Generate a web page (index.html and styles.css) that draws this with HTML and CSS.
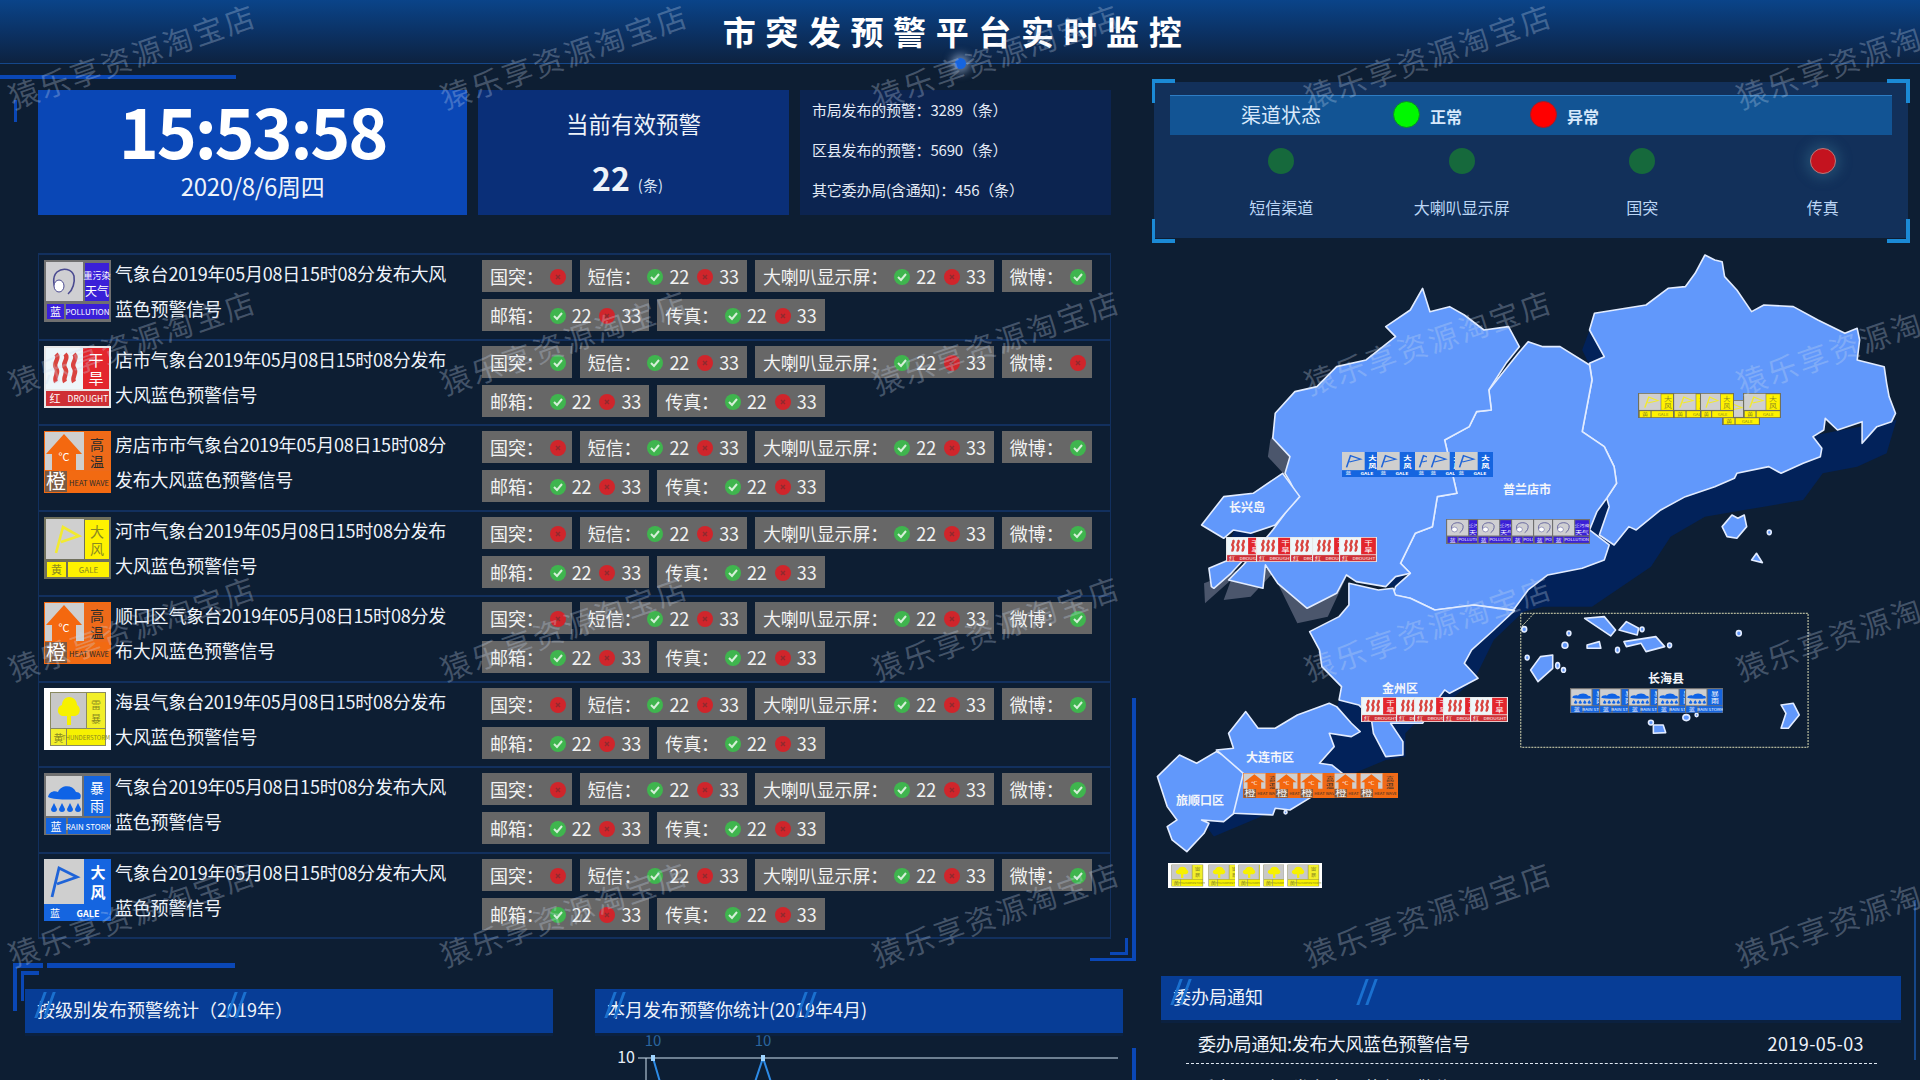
FILE: index.html
```html
<!DOCTYPE html>
<html lang="zh-CN">
<head>
<meta charset="utf-8">
<title>市突发预警平台实时监控</title>
<link rel="stylesheet" href="styles.css">
</head>
<body>
<svg class="sprite" aria-hidden="true">
  <symbol id="ok" viewBox="0 0 16 16"><circle cx="8" cy="8" r="8" fill="#3fb54e"/><path d="M4 8l3 3 5-6" fill="none" stroke="#d5f0d8" stroke-width="2"/></symbol>
  <symbol id="no" viewBox="0 0 16 16"><circle cx="8" cy="8" r="8" fill="#d0252b"/><path d="M6 6l4 4M10 6l-4 4" fill="none" stroke="#8f2a2f" stroke-width="1.4"/></symbol>

  <symbol id="w-pollution" viewBox="0 0 67 62" preserveAspectRatio="none">
    <rect width="67" height="62" fill="#707070"/>
    <rect x="2" y="2" width="37" height="39" fill="#cfcfd2"/>
    <rect x="41" y="3" width="24" height="38" fill="#3a20d8"/>
    <rect x="3" y="44" width="17" height="15" fill="#3a20d8"/>
    <rect x="22" y="44" width="43" height="15" fill="#3a20d8"/>
    <path d="M14 31c-5-4-6-14-1-19 6-5 15-3 17 4 1 6-1 14-6 18" fill="none" stroke="#4a4a90" stroke-width="1.6"/>
    <ellipse cx="15" cy="26" rx="5" ry="6" fill="#fff" stroke="#4a4a90"/>
    <text class="ws" x="53" y="19" font-size="9">重污染</text>
    <text class="ws" x="53" y="36" font-size="12">天气</text>
    <text class="ws" x="11.5" y="56" font-size="11">蓝</text>
    <text class="ws" x="43.5" y="55" font-size="8">POLLUTION</text>
  </symbol>

  <symbol id="w-drought" viewBox="0 0 67 62" preserveAspectRatio="none">
    <rect width="67" height="62" fill="#e8e8e8"/>
    <rect x="2" y="2" width="37" height="41" fill="#eef6fa"/>
    <rect x="39" y="2" width="26" height="41" fill="#e3262d"/>
    <rect x="2" y="45" width="63" height="15" fill="#cf2f35"/>
    <path d="M12 8c5 5-4 9 0 14s-3 9 0 14M21 8c5 5-4 9 0 14s-3 9 0 14M30 8c5 5-4 9 0 14s-3 9 0 14" fill="none" stroke="#d9443f" stroke-width="4.4"/>
    <text class="ws" x="52" y="20" font-size="15">干</text>
    <text class="ws" x="52" y="38" font-size="15">旱</text>
    <text class="ws" x="11" y="57" font-size="11">红</text>
    <text class="ws" x="44" y="56" font-size="8.5">DROUGHT</text>
  </symbol>

  <symbol id="w-heat" viewBox="0 0 67 62" preserveAspectRatio="none">
    <rect width="67" height="62" fill="#f26a12"/>
    <rect x="1" y="1" width="39" height="38" fill="#cfcfcf"/>
    <path d="M20 3l18 20h-6v17H8V23H2z" fill="#f4680f"/>
    <rect x="40" y="2" width="26" height="38" fill="#ee6a1a"/>
    <rect x="1" y="40" width="22" height="21" fill="#7a5a44"/>
    <text class="ws" x="20" y="30" font-size="11">°C</text>
    <text class="wk" x="53" y="19" font-size="14">高</text>
    <text class="wk" x="53" y="36" font-size="14">温</text>
    <text class="ws" x="12" y="58" font-size="20">橙</text>
    <text class="wk" x="45" y="55" font-size="7.5">HEAT WAVE</text>
  </symbol>

  <symbol id="w-gale-y" viewBox="0 0 67 62" preserveAspectRatio="none">
    <rect width="67" height="62" fill="#70705c"/>
    <rect x="2" y="2" width="38" height="40" fill="#cfcfcf"/>
    <rect x="41" y="3" width="24" height="39" fill="#fff200"/>
    <rect x="3" y="45" width="19" height="15" fill="#fff200"/>
    <rect x="24" y="45" width="41" height="15" fill="#fff200"/>
    <path d="M12 36l7-26 16 9-18 6" fill="none" stroke="#f2ea30" stroke-width="2.6"/>
    <text class="wy" x="53" y="20" font-size="14">大</text>
    <text class="wy" x="53" y="37" font-size="14">风</text>
    <text class="wy" x="12.5" y="57" font-size="11">黄</text>
    <text class="wy" x="44.500" y="56" font-size="8">GALE</text>
  </symbol>

  <symbol id="w-hail" viewBox="0 0 67 62" preserveAspectRatio="none">
    <rect width="67" height="62" fill="#fff"/>
    <rect x="6" y="4" width="56" height="54" fill="#8a8a60"/>
    <rect x="7" y="5" width="35" height="35" fill="#c8c8c8"/>
    <rect x="43" y="5" width="18" height="35" fill="#f2ef2a"/>
    <rect x="7" y="41" width="15" height="16" fill="#f2ef2a"/>
    <rect x="23" y="41" width="38" height="16" fill="#f7f100"/>
    <path d="M25 9c5 0 8 4 8 8 4 2 4 10-2 11h-4v9h-4v-9h-5c-6-2-5-10 0-11 0-4 3-8 7-8z" fill="#f7f100"/>
    <text class="wy" x="52" y="21" font-size="10">雷</text>
    <text class="wy" x="52" y="35" font-size="10">暴</text>
    <text class="wy" x="14.500" y="54" font-size="10">黄</text>
    <text class="wy" x="42" y="52" font-size="6">THUNDERSTORM</text>
  </symbol>

  <symbol id="w-rain" viewBox="0 0 67 62" preserveAspectRatio="none">
    <rect width="67" height="62" fill="#707070"/>
    <rect x="2" y="3" width="36" height="40" fill="#cfcfcf"/>
    <rect x="40" y="3" width="26" height="40" fill="#1565e0"/>
    <rect x="2" y="45" width="20" height="16" fill="#1565e0"/>
    <rect x="24" y="45" width="42" height="16" fill="#1565e0"/>
    <path d="M4 24c1-5 6-7 10-5 3-7 14-8 18 0 4 0 6 3 4 7-8 1-26 1-32-2z" fill="#0f63e6"/>
    <path d="M10 30l3 6a3 3 0 1 1-6 0zM18 30l3 6a3 3 0 1 1-6 0zM26 30l3 6a3 3 0 1 1-6 0zM34 30l3 6a3 3 0 1 1-6 0z" fill="#0f63e6"/>
    <text class="ws" x="53" y="20" font-size="14">暴</text>
    <text class="ws" x="53" y="38" font-size="14">雨</text>
    <text class="ws" x="12" y="58" font-size="11">蓝</text>
    <text class="ws" x="45" y="57" font-size="8">RAIN STORM</text>
  </symbol>

  <symbol id="w-gale-b" viewBox="0 0 67 62" preserveAspectRatio="none">
    <rect width="67" height="62" fill="#1565e0"/>
    <rect x="0" y="0" width="40" height="45" fill="#cfcfcf"/>
    <path d="M8 38l7-29 18 9-20 7" fill="none" stroke="#1f64d8" stroke-width="2.8"/>
    <text class="ws bold" x="54" y="19" font-size="15">大</text>
    <text class="ws bold" x="54" y="39" font-size="15">风</text>
    <text class="ws" x="11" y="58" font-size="10">蓝</text>
    <text class="ws bold" x="44" y="58" font-size="9">GALE</text>
  </symbol>
</svg>

<header class="top">
  <h1 class="title">市突发预警平台实时监控</h1>
  <i class="top-dot"></i>
</header>

<main class="screen">
  <section class="left">
    <div class="cards">
      <div class="card card-time">
        <div class="time">15:53:58</div>
        <div class="date">2020/8/6周四</div>
      </div>
      <div class="card card-count">
        <div class="count-title">当前有效预警</div>
        <div class="count-num"><b>22</b> <small>(条)</small></div>
      </div>
      <div class="card card-stat">
        <p>市局发布的预警：3289（条）</p>
        <p>区县发布的预警：5690（条）</p>
        <p>其它委办局(含通知)：456（条）</p>
      </div>
    </div>

    <div class="table">
      <article class="row">
        <svg class="row-icon"><use href="#w-pollution"/></svg>
        <p class="row-text">气象台2019年05月08日15时08分发布大风蓝色预警信号</p>
        <div class="chips">
          <span class="chip">国突：<svg class="st"><use href="#no"/></svg></span>
          <span class="chip">短信：<svg class="st"><use href="#ok"/></svg>22<svg class="st"><use href="#no"/></svg>33</span>
          <span class="chip">大喇叭显示屏：<svg class="st"><use href="#ok"/></svg>22<svg class="st"><use href="#no"/></svg>33</span>
          <span class="chip">微博：<svg class="st"><use href="#ok"/></svg></span>
          <span class="chip">邮箱：<svg class="st"><use href="#ok"/></svg>22<svg class="st"><use href="#no"/></svg>33</span>
          <span class="chip">传真：<svg class="st"><use href="#ok"/></svg>22<svg class="st"><use href="#no"/></svg>33</span>
        </div>
      </article>
      <article class="row">
        <svg class="row-icon"><use href="#w-drought"/></svg>
        <p class="row-text">店市气象台2019年05月08日15时08分发布大风蓝色预警信号</p>
        <div class="chips">
          <span class="chip">国突：<svg class="st"><use href="#ok"/></svg></span>
          <span class="chip">短信：<svg class="st"><use href="#ok"/></svg>22<svg class="st"><use href="#no"/></svg>33</span>
          <span class="chip">大喇叭显示屏：<svg class="st"><use href="#ok"/></svg>22<svg class="st"><use href="#no"/></svg>33</span>
          <span class="chip">微博：<svg class="st"><use href="#no"/></svg></span>
          <span class="chip">邮箱：<svg class="st"><use href="#ok"/></svg>22<svg class="st"><use href="#no"/></svg>33</span>
          <span class="chip">传真：<svg class="st"><use href="#ok"/></svg>22<svg class="st"><use href="#no"/></svg>33</span>
        </div>
      </article>
      <article class="row">
        <svg class="row-icon"><use href="#w-heat"/></svg>
        <p class="row-text">房店市市气象台2019年05月08日15时08分发布大风蓝色预警信号</p>
        <div class="chips">
          <span class="chip">国突：<svg class="st"><use href="#no"/></svg></span>
          <span class="chip">短信：<svg class="st"><use href="#ok"/></svg>22<svg class="st"><use href="#no"/></svg>33</span>
          <span class="chip">大喇叭显示屏：<svg class="st"><use href="#ok"/></svg>22<svg class="st"><use href="#no"/></svg>33</span>
          <span class="chip">微博：<svg class="st"><use href="#ok"/></svg></span>
          <span class="chip">邮箱：<svg class="st"><use href="#ok"/></svg>22<svg class="st"><use href="#no"/></svg>33</span>
          <span class="chip">传真：<svg class="st"><use href="#ok"/></svg>22<svg class="st"><use href="#no"/></svg>33</span>
        </div>
      </article>
      <article class="row">
        <svg class="row-icon"><use href="#w-gale-y"/></svg>
        <p class="row-text">河市气象台2019年05月08日15时08分发布大风蓝色预警信号</p>
        <div class="chips">
          <span class="chip">国突：<svg class="st"><use href="#no"/></svg></span>
          <span class="chip">短信：<svg class="st"><use href="#ok"/></svg>22<svg class="st"><use href="#no"/></svg>33</span>
          <span class="chip">大喇叭显示屏：<svg class="st"><use href="#ok"/></svg>22<svg class="st"><use href="#no"/></svg>33</span>
          <span class="chip">微博：<svg class="st"><use href="#ok"/></svg></span>
          <span class="chip">邮箱：<svg class="st"><use href="#ok"/></svg>22<svg class="st"><use href="#no"/></svg>33</span>
          <span class="chip">传真：<svg class="st"><use href="#ok"/></svg>22<svg class="st"><use href="#no"/></svg>33</span>
        </div>
      </article>
      <article class="row">
        <svg class="row-icon"><use href="#w-heat"/></svg>
        <p class="row-text">顺口区气象台2019年05月08日15时08分发布大风蓝色预警信号</p>
        <div class="chips">
          <span class="chip">国突：<svg class="st"><use href="#no"/></svg></span>
          <span class="chip">短信：<svg class="st"><use href="#ok"/></svg>22<svg class="st"><use href="#no"/></svg>33</span>
          <span class="chip">大喇叭显示屏：<svg class="st"><use href="#ok"/></svg>22<svg class="st"><use href="#no"/></svg>33</span>
          <span class="chip">微博：<svg class="st"><use href="#ok"/></svg></span>
          <span class="chip">邮箱：<svg class="st"><use href="#ok"/></svg>22<svg class="st"><use href="#no"/></svg>33</span>
          <span class="chip">传真：<svg class="st"><use href="#ok"/></svg>22<svg class="st"><use href="#no"/></svg>33</span>
        </div>
      </article>
      <article class="row">
        <svg class="row-icon"><use href="#w-hail"/></svg>
        <p class="row-text">海县气象台2019年05月08日15时08分发布大风蓝色预警信号</p>
        <div class="chips">
          <span class="chip">国突：<svg class="st"><use href="#no"/></svg></span>
          <span class="chip">短信：<svg class="st"><use href="#ok"/></svg>22<svg class="st"><use href="#no"/></svg>33</span>
          <span class="chip">大喇叭显示屏：<svg class="st"><use href="#ok"/></svg>22<svg class="st"><use href="#no"/></svg>33</span>
          <span class="chip">微博：<svg class="st"><use href="#ok"/></svg></span>
          <span class="chip">邮箱：<svg class="st"><use href="#ok"/></svg>22<svg class="st"><use href="#no"/></svg>33</span>
          <span class="chip">传真：<svg class="st"><use href="#ok"/></svg>22<svg class="st"><use href="#no"/></svg>33</span>
        </div>
      </article>
      <article class="row">
        <svg class="row-icon"><use href="#w-rain"/></svg>
        <p class="row-text">气象台2019年05月08日15时08分发布大风蓝色预警信号</p>
        <div class="chips">
          <span class="chip">国突：<svg class="st"><use href="#no"/></svg></span>
          <span class="chip">短信：<svg class="st"><use href="#ok"/></svg>22<svg class="st"><use href="#no"/></svg>33</span>
          <span class="chip">大喇叭显示屏：<svg class="st"><use href="#ok"/></svg>22<svg class="st"><use href="#no"/></svg>33</span>
          <span class="chip">微博：<svg class="st"><use href="#ok"/></svg></span>
          <span class="chip">邮箱：<svg class="st"><use href="#ok"/></svg>22<svg class="st"><use href="#no"/></svg>33</span>
          <span class="chip">传真：<svg class="st"><use href="#ok"/></svg>22<svg class="st"><use href="#no"/></svg>33</span>
        </div>
      </article>
      <article class="row">
        <svg class="row-icon"><use href="#w-gale-b"/></svg>
        <p class="row-text">气象台2019年05月08日15时08分发布大风蓝色预警信号</p>
        <div class="chips">
          <span class="chip">国突：<svg class="st"><use href="#no"/></svg></span>
          <span class="chip">短信：<svg class="st"><use href="#ok"/></svg>22<svg class="st"><use href="#no"/></svg>33</span>
          <span class="chip">大喇叭显示屏：<svg class="st"><use href="#ok"/></svg>22<svg class="st"><use href="#no"/></svg>33</span>
          <span class="chip">微博：<svg class="st"><use href="#ok"/></svg></span>
          <span class="chip">邮箱：<svg class="st"><use href="#ok"/></svg>22<svg class="st"><use href="#no"/></svg>33</span>
          <span class="chip">传真：<svg class="st"><use href="#ok"/></svg>22<svg class="st"><use href="#no"/></svg>33</span>
        </div>
      </article>
    </div>

    <div class="stats">
      <div class="stat-col">
        <h2 class="bar"><i class="slash s1"></i><i class="slash s2"></i>按级别发布预警统计（2019年）</h2>
      </div>
      <div class="stat-col">
        <h2 class="bar"><i class="slash s1"></i><i class="slash s2"></i>本月发布预警你统计(2019年4月)</h2>
        <svg class="chart" viewBox="595 1033 528 47">
          <path class="axis" d="M638 1058H1118M646 1058V1080"/>
          <path class="trend" d="M653 1058L660 1082M755 1082L763 1058L771 1082"/>
          <rect class="peak" x="651" y="1055" width="4" height="6"/>
          <rect class="peak" x="761" y="1055" width="4" height="6"/>
          <text class="ylab" x="635" y="1063">10</text>
          <text class="plab" x="653" y="1046">10</text>
          <text class="plab" x="763" y="1046">10</text>
        </svg>
      </div>
    </div>
  </section>

  <section class="right">
    <div class="channel">
      <i class="cn cn-tl"></i><i class="cn cn-tr"></i><i class="cn cn-bl"></i><i class="cn cn-br"></i>
      <div class="channel-body">
        <div class="legend">
          <span class="legend-title">渠道状态</span>
          <span class="legend-dot green"></span><span class="legend-label">正常</span>
          <span class="legend-dot red"></span><span class="legend-label">异常</span>
        </div>
        <div class="lamps">
          <div class="lamp"><i class="lamp-dot good"></i><span>短信渠道</span></div>
          <div class="lamp"><i class="lamp-dot good"></i><span>大喇叭显示屏</span></div>
          <div class="lamp"><i class="lamp-dot good"></i><span>国突</span></div>
          <div class="lamp"><i class="lamp-dot bad"></i><span>传真</span></div>
        </div>
      </div>
    </div>

    <svg class="map" viewBox="1150 243 770 717">
      <g transform="translate(1150 240) scale(.4911 .3333)">
        <polygon class="sea" points="1520,540 1500,640 1440,680 1370,700 1330,780 1250,800 1130,830 1060,890 1020,980 960,1040 900,1100 800,1100 760,1115 700,1200 660,1320 620,1370 600,1380 540,1450 520,1480 520,1550 480,1560 400,1610 350,1570 375,1520 365,1480 385,1380 900,800 1300,600"/>
        <polygon class="sea" points="895,270 925,350 895,375 880,330"/>
        <polygon class="sea" points="895,870 912,815 942,795 930,900"/>
        <polygon class="sea" points="480,1040 500,1005 518,1005 505,1040"/>
        <polygon class="sea" points="165,895 172,870 205,870 216,895"/>
        <polygon class="sea" points="105,1740 150,1745 180,1710 250,1715 130,1790"/>
        <polygon class="ghost" points="265,540 245,600 240,650 290,730 285,650 250,595"/>
        <polygon class="ghost" points="110,1030 112,1090 165,1020 150,1080 205,1070 250,1000 300,1150 362,1130 400,1010 380,1060 320,1105 250,985 180,990"/>

        <polygon class="land" points="1130,45 1150,60 1165,65 1170,110 1195,150 1225,215 1250,195 1310,200 1360,240 1415,280 1440,265 1445,300 1440,360 1495,380 1500,430 1505,470 1518,520 1510,545 1480,560 1450,610 1450,545 1400,570 1375,535 1372,570 1350,590 1368,625 1365,650 1330,670 1285,700 1260,680 1195,700 1190,715 1150,740 1090,770 1040,810 990,870 975,860 945,915 915,885 935,800 930,775 950,730 945,680 925,620 880,575 900,420 895,370 925,350 895,270 905,220 1010,195 1055,145 1090,140 1110,100"/>
        <polygon class="land" points="770,305 800,320 835,320 895,375 900,420 880,575 925,620 945,680 950,730 930,775 910,815 895,870 935,915 925,960 880,985 810,1005 770,1050 740,1110 660,1095 580,1110 530,1075 495,1065 500,1040 530,1000 510,970 540,880 575,860 585,770 625,760 600,600 650,560 665,515 695,510 690,450 750,340"/>
        <polygon class="land" points="555,145 570,215 610,200 640,225 680,270 730,260 752,320 725,370 690,450 695,510 665,515 650,560 600,600 625,760 585,770 575,860 540,880 510,970 530,1000 500,1010 480,1040 420,1025 400,1005 380,1060 320,1105 260,1030 235,975 230,1045 160,1020 190,975 250,870 300,770 285,725 275,700 285,650 250,595 255,520 295,455 340,440 380,380 440,360 500,290 480,260 530,210"/>
        <polygon class="land" points="270,700 290,740 305,770 275,820 255,855 205,880 170,870 150,895 105,855 150,770 210,760"/>
        <polygon class="land" points="125,1040 120,985 160,960 190,960 165,1000 130,1045"/>
        <polygon class="land" points="405,1030 465,1050 495,1045 500,1065 530,1075 580,1110 660,1095 742,1112 700,1170 655,1230 640,1270 668,1315 610,1360 600,1350 580,1390 555,1450 490,1450 515,1505 515,1545 480,1550 455,1480 450,1430 425,1395 385,1380 390,1340 350,1280 345,1230 325,1175 385,1130 405,1095"/>
        <polygon class="land" points="60,1545 95,1570 135,1535 170,1560 190,1600 250,1705 250,1720 180,1710 150,1745 105,1740 120,1750 110,1780 75,1835 45,1800 35,1760 55,1740 35,1700 15,1610"/>
        <polygon class="land" points="195,1415 220,1465 255,1465 300,1425 365,1390 380,1400 410,1450 428,1475 410,1490 365,1480 375,1520 345,1570 370,1575 400,1610 330,1670 285,1710 255,1705 250,1725 170,1720 190,1600 135,1530 170,1525 160,1480"/>
        <polygon class="land" points="1165,860 1185,825 1197,835 1210,825 1215,860 1195,895 1175,890"/>
        <polygon class="land" points="1225,960 1235,940 1247,968"/>
        <polygon class="land" points="885,1135 925,1130 948,1170 938,1188"/>
        <polygon class="land" points="955,1170 970,1145 995,1165 992,1185"/>
        <polygon class="land" points="890,1215 915,1205 918,1225 890,1225"/>
        <polygon class="land" points="965,1205 1030,1190 1048,1220 1010,1235 1000,1210 970,1220"/>
        <polygon class="land" points="775,1290 795,1250 820,1245 820,1285 790,1325"/>
        <polygon class="land" points="1285,1395 1310,1390 1322,1425 1300,1465 1285,1465 1295,1420"/>
        <polygon class="land" points="1025,1455 1045,1455 1050,1478 1025,1480"/>
        <ellipse class="land" cx="853" cy="1180" rx="4" ry="7"/><ellipse class="land" cx="845" cy="1216" rx="6" ry="9"/>
        <ellipse class="land" cx="952" cy="1230" rx="4" ry="8"/><ellipse class="land" cx="1002" cy="1168" rx="4" ry="7"/>
        <ellipse class="land" cx="1058" cy="1216" rx="4" ry="7"/><ellipse class="land" cx="1199" cy="1180" rx="5" ry="8"/>
        <ellipse class="land" cx="762" cy="1168" rx="5" ry="8"/><ellipse class="land" cx="768" cy="1253" rx="4" ry="7"/>
        <ellipse class="land" cx="830" cy="1277" rx="4" ry="9"/><ellipse class="land" cx="842" cy="1290" rx="4" ry="7"/>
        <ellipse class="land" cx="1092" cy="1433" rx="7" ry="9"/><ellipse class="land" cx="1113" cy="1425" rx="3" ry="5"/>
        <ellipse class="land" cx="1020" cy="1448" rx="5" ry="7"/><ellipse class="land" cx="1261" cy="877" rx="4" ry="7"/>
        <ellipse class="land" cx="276" cy="1717" rx="3" ry="5"/>
        <rect class="box" x="755" y="1120" width="585" height="402"/>
        <path class="box" d="M758 1158L782 1120"/>
      </g>

      <use href="#w-gale-b" x="1342" y="452" width="38" height="25"/><use href="#w-gale-b" x="1377" y="452" width="38" height="25"/><use href="#w-gale-b" x="1415" y="452" width="38" height="25"/><use href="#w-gale-b" x="1427" y="452" width="38" height="25"/><use href="#w-gale-b" x="1455" y="452" width="38" height="25"/>
      <use href="#w-drought" x="1226" y="537" width="38" height="25"/><use href="#w-drought" x="1256" y="537" width="38" height="25"/><use href="#w-drought" x="1290" y="537" width="38" height="25"/><use href="#w-drought" x="1312" y="537" width="38" height="25"/><use href="#w-drought" x="1339" y="537" width="38" height="25"/>
      <use href="#w-pollution" x="1446" y="519" width="38" height="25"/><use href="#w-pollution" x="1477" y="519" width="38" height="25"/><use href="#w-pollution" x="1511" y="519" width="38" height="25"/><use href="#w-pollution" x="1533" y="519" width="38" height="25"/><use href="#w-pollution" x="1552" y="519" width="38" height="25"/>
      <use href="#w-gale-y" x="1722" y="400" width="38" height="25"/><use href="#w-gale-y" x="1638" y="393" width="38" height="25"/><use href="#w-gale-y" x="1673" y="393" width="38" height="25"/><use href="#w-gale-y" x="1700" y="393" width="34" height="25"/><use href="#w-gale-y" x="1743" y="393" width="38" height="25"/>
      <use href="#w-drought" x="1361" y="697" width="38" height="25"/><use href="#w-drought" x="1396" y="697" width="38" height="25"/><use href="#w-drought" x="1414" y="697" width="38" height="25"/><use href="#w-drought" x="1443" y="697" width="38" height="25"/><use href="#w-drought" x="1470" y="697" width="38" height="25"/>
      <use href="#w-heat" x="1243" y="773" width="38" height="25"/><use href="#w-heat" x="1275" y="773" width="38" height="25"/><use href="#w-heat" x="1300" y="773" width="38" height="25"/><use href="#w-heat" x="1334" y="773" width="38" height="25"/><use href="#w-heat" x="1360" y="773" width="38" height="25"/>
      <use href="#w-rain" x="1570" y="688" width="38" height="25"/><use href="#w-rain" x="1599" y="688" width="38" height="25"/><use href="#w-rain" x="1628" y="688" width="38" height="25"/><use href="#w-rain" x="1657" y="688" width="38" height="25"/><use href="#w-rain" x="1685" y="688" width="38" height="25"/>
      <use href="#w-hail" x="1168" y="863" width="38" height="25"/><use href="#w-hail" x="1205" y="863" width="38" height="25"/><use href="#w-hail" x="1235" y="863" width="38" height="25"/><use href="#w-hail" x="1260" y="863" width="38" height="25"/><use href="#w-hail" x="1284" y="863" width="38" height="25"/>

      <text class="place" x="1247" y="512">长兴岛</text>
      <text class="place" x="1527" y="494">普兰店市</text>
      <text class="place" x="1400" y="693">金州区</text>
      <text class="place" x="1270" y="762">大连市区</text>
      <text class="place" x="1200" y="805">旅顺口区</text>
      <text class="place" x="1666" y="683">长海县</text>
    </svg>

    <div class="notice">
      <h2 class="bar bar-notice"><i class="slash s1"></i><i class="slash s3"></i>委办局通知</h2>
      <ul class="notice-list">
        <li><span>委办局通知:发布大风蓝色预警信号</span><time>2019-05-03</time></li>
        <li><span>委办局通知:发布大风蓝色预警信号</span><time>2019-05-03</time></li>
      </ul>
    </div>
  </section>
</main>

<i class="deco deco-top-bar"></i>
<i class="deco deco-top-v"></i>
<i class="deco deco-bl-a"></i>
<i class="deco deco-bl-b"></i>
<i class="deco deco-bl-c"></i>
<i class="deco deco-bl-d"></i>
<i class="deco deco-bl-e"></i>
<i class="deco deco-br-v"></i>
<i class="deco deco-br-h"></i>
<i class="deco deco-br-iv"></i>
<i class="deco deco-br-ih"></i>
<i class="deco deco-br-low"></i>
<i class="deco deco-edge"></i>

<div class="watermarks" aria-hidden="true">
  <div class="wm-grid">
    <span>猿乐享资源淘宝店</span><span>猿乐享资源淘宝店</span><span>猿乐享资源淘宝店</span><span>猿乐享资源淘宝店</span><span>猿乐享资源淘宝店</span>
    <span>猿乐享资源淘宝店</span><span>猿乐享资源淘宝店</span><span>猿乐享资源淘宝店</span><span>猿乐享资源淘宝店</span><span>猿乐享资源淘宝店</span>
    <span>猿乐享资源淘宝店</span><span>猿乐享资源淘宝店</span><span>猿乐享资源淘宝店</span><span>猿乐享资源淘宝店</span><span>猿乐享资源淘宝店</span>
    <span>猿乐享资源淘宝店</span><span>猿乐享资源淘宝店</span><span>猿乐享资源淘宝店</span><span>猿乐享资源淘宝店</span><span>猿乐享资源淘宝店</span>
  </div>
</div>
</body>
</html>
```
FILE: styles.css
```css
* { box-sizing: border-box; }
html, body { margin: 0; padding: 0; }
body {
  position: relative;
  width: 1920px;
  height: 1080px;
  overflow: hidden;
  background: #0d1e33;
  color: #eef3fa;
  font-family: "Noto Sans CJK SC", "Noto Sans", sans-serif;
  font-size: 18px;
}
h1, h2, p, ul { margin: 0; padding: 0; font-weight: normal; }
i { display: block; font-style: normal; }
.sprite { position: absolute; width: 0; height: 0; }

/* header */
.top {
  position: relative;
  height: 64px;
  background: linear-gradient(180deg, #0a4489 0%, #0b3469 45%, #0d2240 100%);
  border-bottom: 1px solid #15478a;
  display: flex;
  align-items: center;
  justify-content: center;
}
.title {
  font-size: 33px;
  font-weight: 700;
  letter-spacing: 9.6px;
  color: #fff;
  line-height: 62px;
  margin-bottom: 2px;
  margin-left: -6px;
}
.top-dot {
  position: absolute;
  left: 955px;
  top: 58px;
  width: 11px;
  height: 11px;
  border-radius: 50%;
  background: #1565e0;
  box-shadow: 0 0 9px 4px rgba(190, 215, 255, .55);
}

/* layout */
.screen { display: flex; height: 1016px; }
.left { width: 1150px; flex: none; }
.right { width: 770px; flex: none; }

/* top cards */
.cards {
  display: flex;
  gap: 11px;
  margin: 26px 0 0 38px;
  height: 125px;
}
.card { height: 125px; }
.card-time {
  width: 429px;
  background: #0a47b6;
  display: flex;
  flex-direction: column;
  align-items: center;
  padding-top: 4px;
  gap: 5px;
}
.time { font-size: 68px; font-weight: 700; line-height: 72px; letter-spacing: -2.2px; color: #fff; }
.date { font-size: 24px; line-height: 30px; letter-spacing: -.3px; }
.card-count {
  width: 311px;
  background: #0a2f78;
  display: flex;
  flex-direction: column;
  align-items: center;
  padding-top: 18px;
  gap: 19px;
}
.count-title { font-size: 22.5px; line-height: 30px; }
.count-num { line-height: 40px; margin-left: -12px; }
.count-num b { font-size: 32px; font-weight: 700; }
.count-num small { font-size: 15px; margin-left: 4px; color: #d7e2f3; }
.card-stat { width: 311px; background: #0c2450; padding-left: 12px; }
.card-stat p { font-size: 15px; line-height: 40px; letter-spacing: -.2px; color: #e4ebf6; }

/* table */
.table {
  margin: 38px 0 0 38px;
  width: 1073px;
  border-right: 1px solid #12305e;
  border-left: 1px solid #12305e;
  border-bottom: 2px solid #12305e;
}
.row {
  display: flex;
  height: 85.5px;
  border-top: 2px solid #12305e;
}
.row-icon { width: 67px; height: 62px; margin: 5px 4px 0 5px; flex: none; }
.row-text {
  width: 367px;
  flex: none;
  padding-top: 1px;
  padding-right: 25px;
  font-size: 18px;
  line-height: 35px;
  letter-spacing: -.2px;
}
.chips {
  width: 625px;
  flex: none;
  display: flex;
  flex-wrap: wrap;
  align-content: flex-start;
  gap: 7px 8px;
  padding-top: 5px;
}
.chip {
  display: inline-flex;
  align-items: center;
  height: 32px;
  padding: 0 8px;
  background: #676767;
  color: #f2f2f2;
  font-size: 18px;
  line-height: 32px;
  letter-spacing: -.1px;
}
.st { width: 16px; height: 16px; margin: 2px 6px 0 6px; flex: none; }
.st + .st { margin-left: 8px; }
.st:only-of-type { margin-right: -2px; }

/* bars */
.bar {
  position: relative;
  height: 44px;
  background: #073d96;
  font-size: 18px;
  line-height: 41px;
  padding-left: 12px;
  box-shadow: 0 3px 0 rgba(10, 40, 90, .35);
}
.slash {
  position: absolute;
  top: 3px;
  width: 12px;
  height: 26px;
  border-left: 3px solid #1a70cf;
  border-right: 3px solid #1a70cf;
  transform: skewX(-20deg);
}
.s1 { left: 14px; }
.s2 { left: 205px; }
.s3 { left: 200px; }

/* stats */
.stats {
  display: flex;
  gap: 42px;
  margin: 50px 0 0 25px;
}
.stat-col { width: 528px; }
.chart { display: block; width: 528px; height: 47px; }
.axis { fill: none; stroke: #cfe0f0; stroke-width: 1; }
.trend { fill: none; stroke: #2d8be6; stroke-width: 2; }
.peak { fill: #9fd4ff; }
.ylab { fill: #e6eef8; font-size: 16px; text-anchor: end; }
.plab { fill: #2a659f; font-size: 15px; text-anchor: middle; }

/* channel */
.channel {
  position: relative;
  width: 758px;
  height: 164px;
  margin: 15px 0 0 2px;
  padding: 3px 2px 5px;
}
.channel-body { height: 156px; background: #12305a; padding: 13px 16px 0; }
.legend {
  display: flex;
  align-items: center;
  height: 40px;
  background: #125494;
  border-top: 1px solid #2e7dc4;
  color: #d7e8fb;
}
.legend-title { width: 152px; padding-left: 71px; padding-bottom: 2px; font-size: 20px; white-space: nowrap; flex: none; margin-right: 71px; }
.legend-dot { width: 27px; height: 27px; border-radius: 50%; flex: none; margin-top: -3px; }
.legend-dot.green { background: #00f800; border: 1px solid #0b8a2a; }
.legend-dot.red { background: #ff0000; border: 1px solid #a31d28; }
.legend-label { font-size: 16px; font-weight: 700; width: 110px; padding-left: 10px; }
.lamps { display: flex; }
.lamp {
  width: 180.5px;
  flex: none;
  display: flex;
  flex-direction: column;
  align-items: center;
  padding-top: 13px;
  color: #bcd6f5;
  font-size: 16px;
  line-height: 24px;
  gap: 21px;
}
.lamp:first-child { margin-left: 21px; }
.lamp-dot { width: 26px; height: 26px; border-radius: 50%; }
.lamp-dot.good { background: #16693c; }
.lamp-dot.bad { background: #c4131f; border: 1px solid #b87a7a; box-shadow: 0 0 12px 5px rgba(60, 120, 150, .35); }
.cn { position: absolute; width: 23px; height: 24px; border: 0 solid #1b8ad6; }
.cn-tl { left: 0; top: 0; border-width: 4px 0 0 3px; }
.cn-tr { right: 0; top: 0; border-width: 4px 4px 0 0; }
.cn-bl { left: 0; bottom: 0; border-width: 0 0 4px 3px; }
.cn-br { right: 0; bottom: 0; border-width: 0 4px 4px 0; }

/* map */
.map { display: block; width: 770px; height: 717px; }
.land {
  fill: #6198fb;
  stroke: #e2ecff;
  stroke-width: 1.6;
  stroke-linejoin: round;
  vector-effect: non-scaling-stroke;
}
.sea { fill: #02225a; }
.ghost { fill: #4b566c; }
.box {
  fill: none;
  stroke: #dcdcb4;
  stroke-width: 1;
  stroke-dasharray: 2 1;
  vector-effect: non-scaling-stroke;
}
.place { fill: #f4f6fa; font-size: 12px; font-weight: 700; text-anchor: middle; }
.ws { fill: #fff; text-anchor: middle; }
.wk { fill: #2a2a2a; text-anchor: middle; }
.wy { fill: #8a8a20; text-anchor: middle; }
.bold { font-weight: 700; }

/* notice */
.notice { width: 740px; margin: 16px 0 0 11px; }
.bar-notice { padding-left: 12px; }
.notice-list { list-style: none; margin: 0 24px 0 25px; }
.notice-list li {
  display: flex;
  justify-content: space-between;
  height: 44px;
  padding: 0 13px 0 12px;
  line-height: 46px;
  font-size: 18px;
  letter-spacing: -.2px;
  border-bottom: 1px dashed #dfe8f2;
}
.notice-list time { letter-spacing: .4px; }

/* decoration */
.deco { position: absolute; background: #0a47b6; }
.deco-top-bar { left: 0; top: 75px; width: 236px; height: 4px; }
.deco-top-v { left: 14px; top: 100px; width: 3px; height: 22px; }
.deco-bl-a { left: 13px; top: 963px; width: 30px; height: 5px; }
.deco-bl-b { left: 47px; top: 963px; width: 188px; height: 5px; }
.deco-bl-c { left: 13px; top: 963px; width: 4px; height: 48px; }
.deco-bl-d { left: 21px; top: 971px; width: 18px; height: 4px; }
.deco-bl-e { left: 21px; top: 971px; width: 3px; height: 30px; }
.deco-br-v { left: 1132px; top: 698px; width: 4px; height: 263px; }
.deco-br-h { left: 1090px; top: 958px; width: 46px; height: 3px; }
.deco-br-iv { left: 1125px; top: 938px; width: 3px; height: 17px; }
.deco-br-ih { left: 1110px; top: 952px; width: 18px; height: 3px; }
.deco-br-low { left: 1132px; top: 1048px; width: 4px; height: 32px; }
.deco-edge { left: 1914px; top: 900px; width: 2px; height: 160px; background: #15478a; }

/* watermark */
.watermarks {
  position: absolute;
  left: 0;
  top: 0;
  width: 1920px;
  height: 1080px;
  overflow: hidden;
  pointer-events: none;
}
.wm-grid {
  display: grid;
  grid-template-columns: repeat(5, 432px);
  grid-auto-rows: 286px;
  margin: -88px 0 0 -84px;
  width: 2160px;
}
.wm-grid span {
  display: flex;
  align-items: center;
  justify-content: center;
  font-size: 30px;
  letter-spacing: 2.5px;
  color: rgba(205, 220, 240, .28);
  white-space: nowrap;
  transform: rotate(-19deg);
}
```
